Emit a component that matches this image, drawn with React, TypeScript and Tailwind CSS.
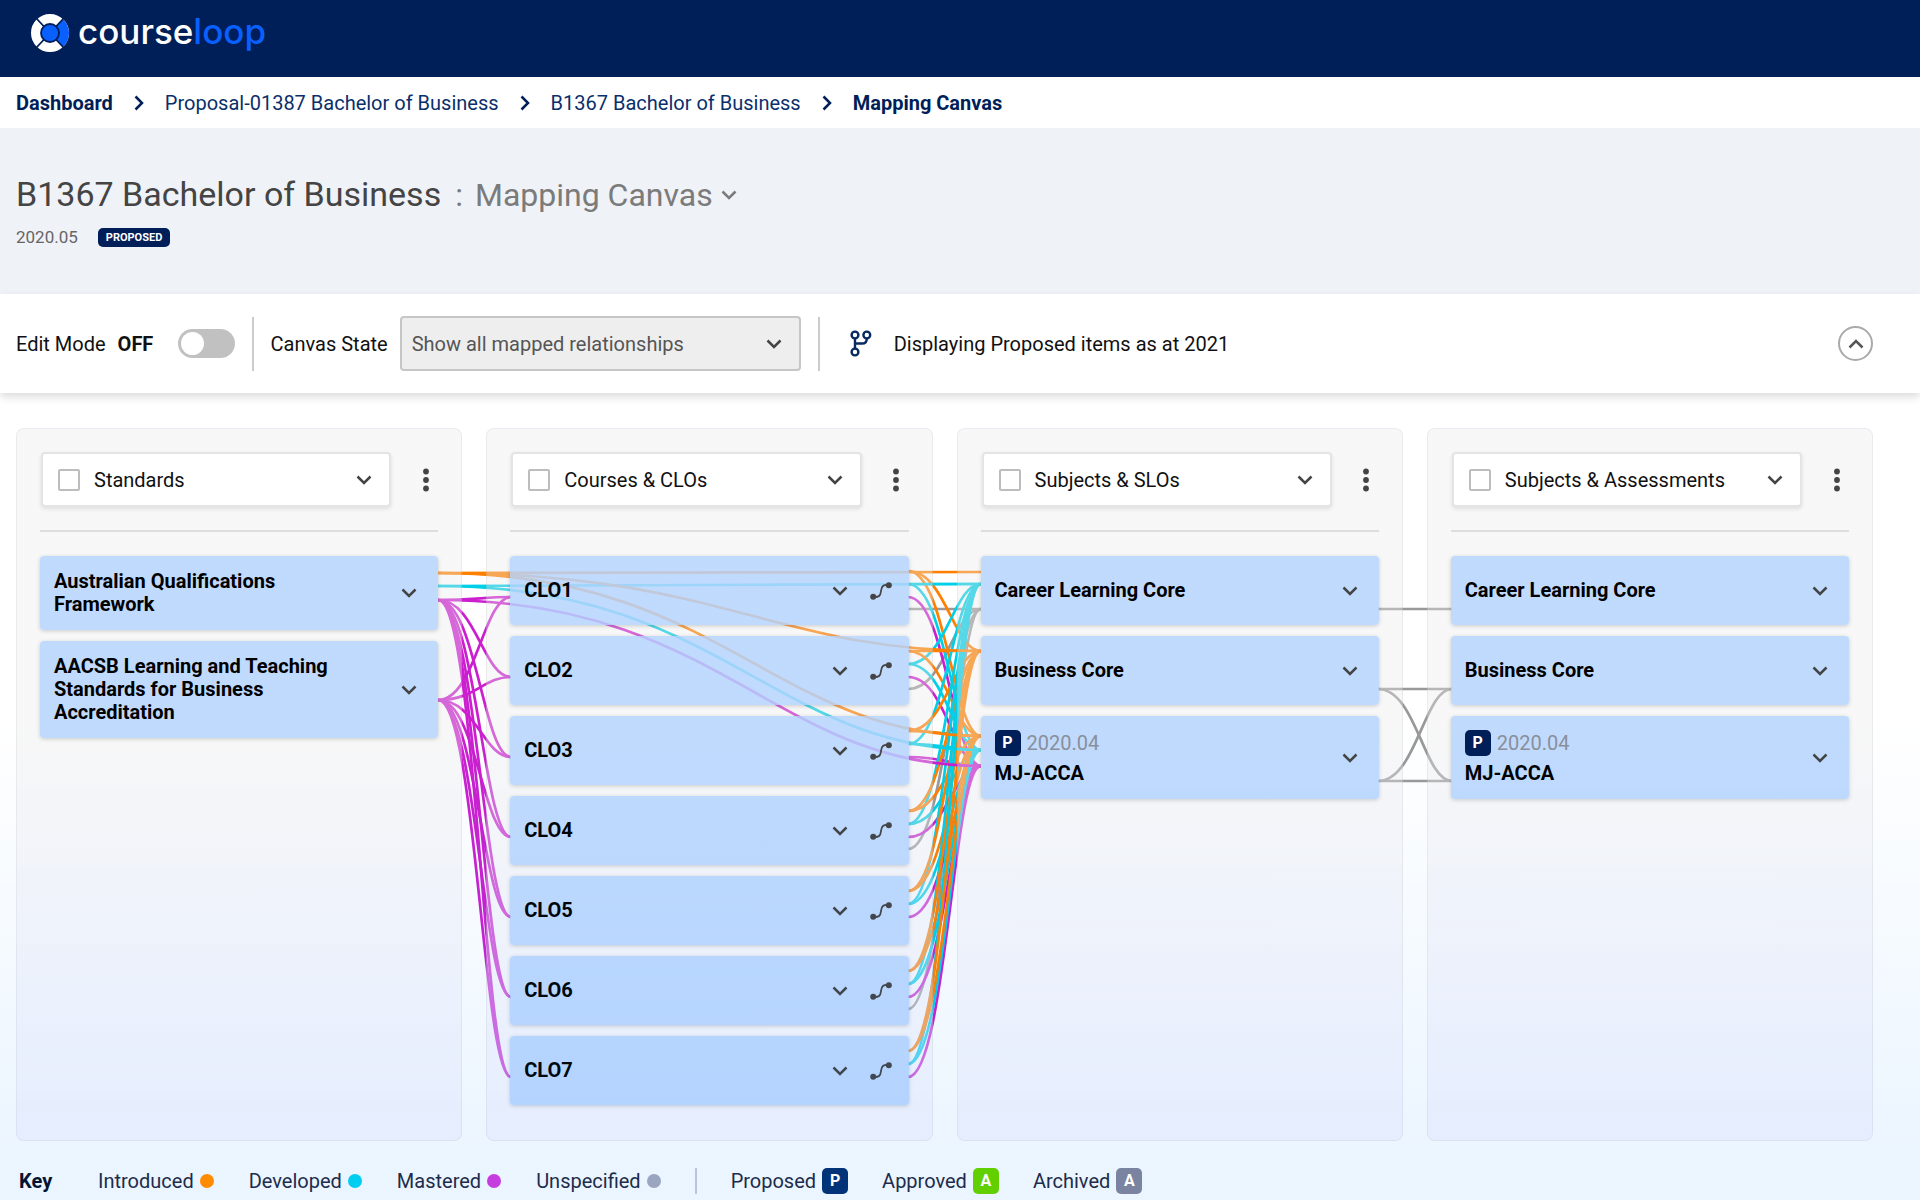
import { useState } from 'react';

type Level = 'introduced' | 'developed' | 'mastered' | 'unspecified';

type Item = { title: string; version?: string; mappable?: boolean };

type Column = { name: string; items: Item[] };

const columns: Column[] = [
  {
    name: 'Standards',
    items: [
      { title: 'Australian Qualifications Framework' },
      { title: 'AACSB Learning and Teaching Standards for Business Accreditation' },
    ],
  },
  {
    name: 'Courses & CLOs',
    items: [1, 2, 3, 4, 5, 6, 7].map((n) => ({ title: `CLO${n}`, mappable: true })),
  },
  {
    name: 'Subjects & SLOs',
    items: [{ title: 'Career Learning Core' }, { title: 'Business Core' }, { title: 'MJ-ACCA', version: '2020.04' }],
  },
  {
    name: 'Subjects & Assessments',
    items: [{ title: 'Career Learning Core' }, { title: 'Business Core' }, { title: 'MJ-ACCA', version: '2020.04' }],
  },
];

const strokes: Record<Level, string> = {
  introduced: '#ff8000',
  developed: '#00cfe8',
  mastered: '#cb1fcf',
  unspecified: '#999999',
};

type Link = { level: Level; from: [number, number]; to: [number, number] };

// Edges of the cards, in the canvas' own units
const STD_RIGHT = 422;
const CLO_LEFT = 495;
const CLO_RIGHT = 892;
const SUB_LEFT = 965;
const SUB_RIGHT = 1362;
const ASM_LEFT = 1436;

const AQF = { introduced: 145, developed: 158, mastered: 172 };
const AACSB = 272;
const CAREER = { introduced: 144, developed: 156, unspecified: 181 };
const BUSINESS = { introduced: 223, unspecified: 261 };
const MAJOR = { introduced: 308, developed: 322, mastered: 338, unspecified: 353 };

const cloTops = [128, 208, 288, 368, 448, 528, 608];
const unspecifiedClos = [0, 1, 3, 5];

const links: Link[] = [
  // Subjects -> Assessments
  { level: 'unspecified', from: [SUB_RIGHT, CAREER.unspecified], to: [ASM_LEFT, CAREER.unspecified] },
  { level: 'unspecified', from: [SUB_RIGHT, BUSINESS.unspecified], to: [ASM_LEFT, BUSINESS.unspecified] },
  { level: 'unspecified', from: [SUB_RIGHT, BUSINESS.unspecified], to: [ASM_LEFT, MAJOR.unspecified] },
  { level: 'unspecified', from: [SUB_RIGHT, MAJOR.unspecified], to: [ASM_LEFT, BUSINESS.unspecified] },
  { level: 'unspecified', from: [SUB_RIGHT, MAJOR.unspecified], to: [ASM_LEFT, MAJOR.unspecified] },
  // Standards -> CLOs
  ...cloTops.flatMap((top): Link[] => [
    { level: 'mastered', from: [STD_RIGHT, AQF.mastered], to: [CLO_LEFT, top + 41] },
    { level: 'mastered', from: [STD_RIGHT, AACSB], to: [CLO_LEFT, top + 41] },
  ]),
  // CLOs -> Subjects
  ...unspecifiedClos.map((i): Link => ({
    level: 'unspecified',
    from: [CLO_RIGHT, cloTops[i] + 53],
    to: [SUB_LEFT, CAREER.unspecified],
  })),
  ...cloTops.flatMap((top): Link[] => [
    { level: 'mastered', from: [CLO_RIGHT, top + 41], to: [SUB_LEFT, MAJOR.mastered] },
    { level: 'developed', from: [CLO_RIGHT, top + 28], to: [SUB_LEFT, CAREER.developed] },
    { level: 'developed', from: [CLO_RIGHT, top + 28], to: [SUB_LEFT, MAJOR.developed] },
    { level: 'introduced', from: [CLO_RIGHT, top + 15], to: [SUB_LEFT, BUSINESS.introduced] },
    { level: 'introduced', from: [CLO_RIGHT, top + 15], to: [SUB_LEFT, MAJOR.introduced] },
  ]),
  // Standards -> Subjects
  { level: 'mastered', from: [STD_RIGHT, AQF.mastered], to: [SUB_LEFT, MAJOR.mastered] },
  { level: 'developed', from: [STD_RIGHT, AQF.developed], to: [SUB_LEFT, CAREER.developed] },
  { level: 'developed', from: [STD_RIGHT, AQF.developed], to: [SUB_LEFT, MAJOR.developed] },
  { level: 'introduced', from: [STD_RIGHT, AQF.introduced], to: [SUB_LEFT, CAREER.introduced] },
  { level: 'introduced', from: [STD_RIGHT, AQF.introduced], to: [SUB_LEFT, BUSINESS.introduced] },
  { level: 'introduced', from: [STD_RIGHT, AQF.introduced], to: [SUB_LEFT, MAJOR.introduced] },
];

const linkPath = ({ from: [x1, y1], to: [x2, y2] }: Link) => {
  const w = x2 - x1;
  return `M${x1} ${y1}C${x1 + w * 0.52} ${y1} ${x1 + w * 0.62} ${y2} ${x2} ${y2}`;
};

const Chevron = ({ className = '' }: { className?: string }) => (
  <svg viewBox="0 0 16 10" className={`h-[10px] w-4 shrink-0 ${className}`} fill="none" aria-hidden="true">
    <path d="M1.500 1.500 8 8 14.500 1.500" stroke="currentColor" strokeWidth="2.500" />
  </svg>
);

const RouteIcon = () => (
  <svg viewBox="0 0 22 18" className="h-[18px] w-[22px]" fill="none" aria-hidden="true">
    <path d="M3 15C9 15.500 10.500 14 11 9S13 2.500 19 3" stroke="currentColor" strokeWidth="1.8" />
    <circle cx="3.200" cy="14.800" r="3" fill="currentColor" />
    <circle cx="18.800" cy="3.200" r="3" fill="currentColor" />
  </svg>
);

const BranchIcon = () => (
  <svg viewBox="0 0 22 27" className="h-[27px] w-[22px] text-[#06295f]" fill="none" stroke="currentColor" strokeWidth="2.4" aria-hidden="true">
    <circle cx="5" cy="5" r="3.400" />
    <circle cx="16.800" cy="5" r="3.400" />
    <circle cx="5" cy="22" r="3.400" />
    <path d="M5 8.400V18.600M16.800 8.400C16.800 12 15.500 13.500 12 13.500H5" />
  </svg>
);

const Logo = () => (
  <a href="#" className="flex items-start gap-2" aria-label="courseloop">
    <svg viewBox="0 0 40 40" className="size-10" fill="none" aria-hidden="true">
      <circle cx="20" cy="20" r="14" stroke="#fff" strokeWidth="10" />
      <path d="M29.400 9.600A14 14 0 0 1 29.400 30.400" stroke="#0a5fff" strokeWidth="10" />
      <path d="M6.500 5.500 14 13.500M33.500 5.500 26 13.500M6.500 34.500 14 26.500M33.500 34.500 26 26.500" stroke="#001e57" strokeWidth="1.800" />
      <circle cx="20" cy="20" r="9" fill="#0a5fff" stroke="#001e57" strokeWidth="1.800" />
    </svg>
    <span className="font-[Inter] text-[35px] leading-9 font-medium text-white">
      course<span className="text-[#0a5fff]">loop</span>
    </span>
  </a>
);

const StateBadge = ({ letter, className }: { letter: string; className: string }) => (
  <span className={`flex size-[26px] shrink-0 items-center justify-center rounded-[5px] text-base font-bold text-white ${className}`}>
    {letter}
  </span>
);

const Breadcrumb = () => (
  <nav aria-label="Breadcrumb" className="bg-white px-4 text-[#001e57]">
    <ol className="flex h-[51px] items-center gap-[18px] text-xl">
      <li><a href="#" className="font-bold">Dashboard</a></li>
      <Chevron className="-rotate-90" />
      <li><a href="#" className="text-[#0a2f6b]">Proposal-01387 Bachelor of Business</a></li>
      <Chevron className="-rotate-90" />
      <li><a href="#" className="text-[#0a2f6b]">B1367 Bachelor of Business</a></li>
      <Chevron className="-rotate-90" />
      <li aria-current="page" className="font-bold">Mapping Canvas</li>
    </ol>
  </nav>
);

const Toolbar = () => {
  const [editMode, setEditMode] = useState(false);

  return (
    <div className="relative flex h-[99px] items-center bg-white pr-[47px] pl-4 text-xl text-[#111] shadow-[0_4px_8px_rgba(0,0,0,0.14)]">
      <label htmlFor="edit-mode" className="flex items-center gap-3">
        Edit Mode <b className="w-12">{editMode ? 'ON' : 'OFF'}</b>
      </label>
      <input
        id="edit-mode"
        type="checkbox"
        role="switch"
        checked={editMode}
        onChange={(e) => setEditMode(e.target.checked)}
        className="ml-3 h-[29px] w-[57px] appearance-none rounded-full bg-[#c1c1c1] p-[3px] before:block before:size-[23px] before:rounded-full before:bg-white checked:bg-[#0a5fff] checked:before:ml-7"
      />
      <div className="ml-[17px] h-[54px] w-[2px] bg-[#ccc]" />
      <label htmlFor="canvas-state" className="ml-[17px]">Canvas State</label>
      <div className="relative ml-3 w-[401px]">
        <select
          id="canvas-state"
          className="h-[55px] w-full appearance-none rounded-[4px] border-2 border-[#c6c6c6] bg-[#eee] px-[10px] text-[#555]"
        >
          <option>Show all mapped relationships</option>
        </select>
        <Chevron className="pointer-events-none absolute top-[23px] right-[19px] text-[#444]" />
      </div>
      <div className="ml-[17px] h-[54px] w-[2px] bg-[#ccc]" />
      <div className="ml-[30px] flex items-center gap-[22px]">
        <BranchIcon />
        Displaying Proposed items as at 2021
      </div>
      <button aria-label="Collapse" className="ml-auto flex size-[35px] items-center justify-center rounded-full border-2 border-[#aaa] text-[#555]">
        <Chevron className="rotate-180" />
      </button>
    </div>
  );
};

const Card = ({ item }: { item: Item }) => (
  <li className="flex min-h-[69px] items-center rounded-[4px] bg-[rgba(177,210,255,0.78)] py-[14px] pr-[17px] pl-[14px] shadow-[0_1px_4px_rgba(0,0,0,0.18)]">
    <div className="w-[300px]">
      {item.version && (
        <div className="mb-[6px] flex items-center gap-[6px] leading-[26px] text-[#8a8f9a]">
          <StateBadge letter="P" className="bg-[#001e57]" />
          {item.version}
        </div>
      )}
      <h3 className="leading-[23px] font-bold text-black">{item.title}</h3>
    </div>
    <div className="ml-auto flex items-center gap-[22px] text-[#444]">
      <button aria-label={`Expand ${item.title}`} className={item.mappable ? '' : 'mr-1'}>
        <Chevron />
      </button>
      {item.mappable && (
        <button aria-label={`Map ${item.title}`}>
          <RouteIcon />
        </button>
      )}
    </div>
  </li>
);

const CanvasColumn = ({ column, id }: { column: Column; id: string }) => (
  <section className="relative rounded-lg border border-black/5 bg-linear-to-b from-[rgba(234,234,234,0.36)] from-45% to-[rgba(235,232,255,0.38)] px-[23px] pt-[23px] pb-[35px]">
    <div className="flex items-center">
      <div className="ml-px flex h-[55px] flex-1 items-center rounded-[4px] border-2 border-[#e4e4e4] bg-white pr-[17px] pl-[15px] shadow-[0_2px_4px_rgba(0,0,0,0.1)]">
        <input id={id} type="checkbox" className="size-[22px] appearance-none rounded-[2px] border-2 border-[#bdbdbd] bg-white checked:bg-[#0a5fff]" />
        <label htmlFor={id} className="ml-[14px] text-[#111]">{column.name}</label>
        <button aria-label={`Choose ${column.name}`} className="ml-auto text-[#444]">
          <Chevron />
        </button>
      </div>
      <button aria-label={`${column.name} menu`} className="flex w-[47px] justify-center pl-[22px]">
        <svg viewBox="0 0 6 24" className="h-6 w-[6px] fill-[#444]" aria-hidden="true">
          <circle cx="3" cy="3.500" r="2.900" />
          <circle cx="3" cy="12" r="2.900" />
          <circle cx="3" cy="20.500" r="2.900" />
        </svg>
      </button>
    </div>
    <hr className="mt-[23px] border-t-2 border-[#ddd]" />
    <ul className="mt-6 flex flex-col gap-[11px]">
      {column.items.map((item) => (
        <Card key={item.title} item={item} />
      ))}
    </ul>
  </section>
);

const levelKeys = [
  { name: 'Introduced', dot: 'bg-[#ff8c00]' },
  { name: 'Developed', dot: 'bg-[#00cdf0]' },
  { name: 'Mastered', dot: 'bg-[#c63ddf]' },
  { name: 'Unspecified', dot: 'bg-[#9aa5bf]' },
];

const stateKeys = [
  { name: 'Proposed', letter: 'P', badge: 'bg-[#003377]' },
  { name: 'Approved', letter: 'A', badge: 'bg-[#62d000]' },
  { name: 'Archived', letter: 'A', badge: 'bg-[#7a84a0]' },
];

// Sits above the blue wash, so its swatches keep their exact colours
const KeyBar = () => (
  <footer className="relative z-10 flex h-[59px] items-center pt-5 pl-[3px] text-[#1d2c4b]">
    <b className="w-[79px] text-[#061433]">Key</b>
    <ul className="flex gap-[35px]">
      {levelKeys.map((k) => (
        <li key={k.name} className="flex items-center gap-[6px]">
          {k.name}
          <span className={`size-[14px] rounded-full ${k.dot}`} />
        </li>
      ))}
    </ul>
    <div className="mx-[34px] h-[26px] w-[2px] bg-[#b9c4dc]" />
    <ul className="flex gap-[34px]">
      {stateKeys.map((k) => (
        <li key={k.name} className="flex items-center gap-[6px]">
          {k.name}
          <StateBadge letter={k.letter} className={k.badge} />
        </li>
      ))}
    </ul>
  </footer>
);

const App = () => {
  return (
    <div className="min-h-screen bg-white font-[Roboto,sans-serif]">
      <header className="flex h-[77px] items-start bg-[#001e57] px-[30px] pt-[13px]">
        <Logo />
      </header>
      <Breadcrumb />

      <div className="h-[166px] bg-[#eff2f7] px-4 pt-[46px]">
        <h1 className="flex items-baseline gap-[14px] text-[34px] leading-10 text-[#444]">
          B1367 Bachelor of Business
          <span className="flex items-center gap-3 text-[32px] text-[#7b7b7b]">
            <span>:</span>
            <button className="flex items-center gap-2">
              Mapping Canvas
              <Chevron />
            </button>
          </span>
        </h1>
        <div className="mt-[10px] flex items-center gap-5 text-[17px] leading-6 text-[#666]">
          2020.05
          <span className="rounded-[5px] bg-[#001e57] px-2 text-[11px] leading-[19px] font-bold text-white">PROPOSED</span>
        </div>
      </div>

      <Toolbar />

      <main className="relative pt-[35px] pr-[47px] pl-4 text-xl">
        <div className="relative grid grid-cols-4 gap-6">
          {/* Mapping lines run behind the columns */}
          <svg
            viewBox="0 0 1857 713"
            preserveAspectRatio="none"
            className="absolute inset-0 h-full w-full"
            fill="none"
            strokeWidth="2.7"
            aria-hidden="true"
          >
            {links.map((link, i) => (
              <path key={i} d={linkPath(link)} stroke={strokes[link.level]} />
            ))}
          </svg>
          {columns.map((column, i) => (
            <CanvasColumn key={column.name} column={column} id={`column-${i}`} />
          ))}
        </div>
        <KeyBar />
        {/* Blue wash towards the bottom of the page */}
        <div className="pointer-events-none absolute inset-0 bg-linear-to-b from-[rgba(0,130,255,0)] from-40% to-[rgba(0,130,255,0.08)] to-95%" />
      </main>
    </div>
  );
};

export default App;
